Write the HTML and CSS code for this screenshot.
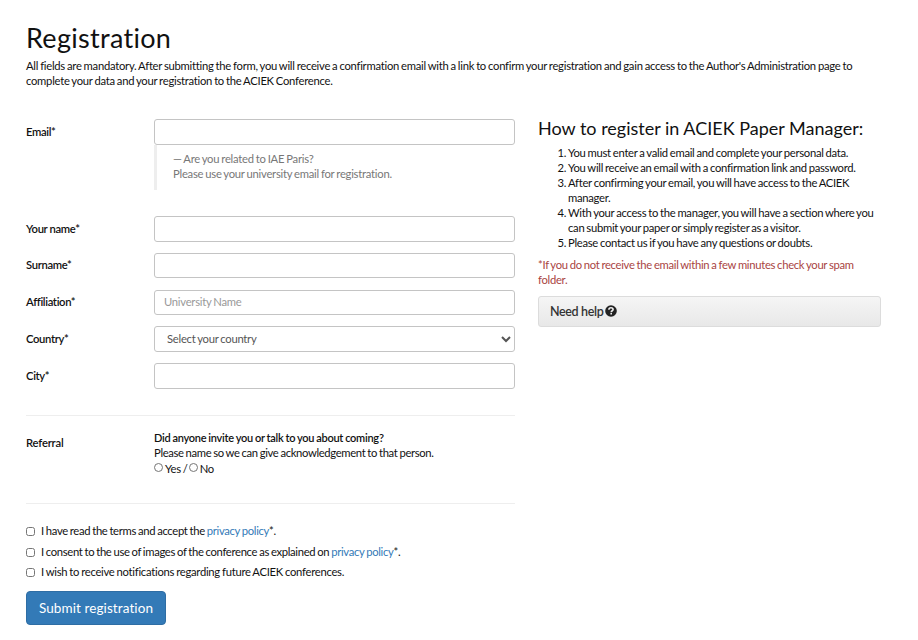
FILE: index.html
```
<!DOCTYPE html>
<html lang="en">
<head>
    <meta charset="UTF-8">
    <meta name="viewport" content="width=device-width, initial-scale=1.0">
    <title>Registration - ACIEK Paper Manager</title>
    <link rel="stylesheet" href="styles.css">
</head>
<body>
    <div class="header">
        <h1>Registration</h1>
        <p>All fields are mandatory. After submitting the form, you will receive a confirmation email with a link to confirm your registration and gain access to the Author's Administration page to<br>
        complete your data and your registration to the ACIEK Conference.</p>
    </div>

    <div class="content">
        <form id="registrationForm">
            <div class="form-row">
                <label for="email">Email*</label>
                <div class="field">
                    <input type="email" id="email" class="form-control">
                    <blockquote>
                        — Are you related to IAE Paris?<br>
                        Please use your university email for registration.
                    </blockquote>
                </div>
            </div>
            <div class="form-row">
                <label for="name">Your name*</label>
                <input type="text" id="name" class="form-control">
            </div>
            <div class="form-row">
                <label for="surname">Surname*</label>
                <input type="text" id="surname" class="form-control">
            </div>
            <div class="form-row">
                <label for="affiliation">Affiliation*</label>
                <input type="text" id="affiliation" class="form-control" placeholder="University Name">
            </div>
            <div class="form-row">
                <label for="country">Country*</label>
                <select id="country" class="form-control">
                    <option>Select your country</option>
                </select>
            </div>
            <div class="form-row">
                <label for="city">City*</label>
                <input type="text" id="city" class="form-control">
            </div>

            <div class="referral">
                <span class="referral-label">Referral</span>
                <div class="referral-text">
                    <strong>Did anyone invite you or talk to you about coming?</strong>
                    <span class="referral-note">Please name so we can give acknowledgement to that person.</span>
                    <div class="radios">
                        <input type="radio" name="referral" id="yes"><label for="yes">Yes /</label>
                        <input type="radio" name="referral" id="no"><label for="no">No</label>
                    </div>
                </div>
            </div>

            <div class="checkbox">
                <input type="checkbox" id="terms">
                <label for="terms">I have read the terms and accept the <a href="#">privacy policy</a>*.</label>
            </div>
            <div class="checkbox">
                <input type="checkbox" id="images">
                <label for="images">I consent to the use of images of the conference as explained on <a href="#">privacy policy</a>*.</label>
            </div>
            <div class="checkbox">
                <input type="checkbox" id="news">
                <label for="news" class="news">I wish to receive notifications regarding future ACIEK conferences.</label>
            </div>
            <button type="submit">Submit registration</button>
        </form>

        <div class="sidebar">
            <h2>How to register in ACIEK Paper Manager:</h2>
            <ol>
                <li>You must enter a valid email and complete your personal data.</li>
                <li>You will receive an email with a confirmation link and password.</li>
                <li>After confirming your email, you will have access to the ACIEK<br>manager.</li>
                <li>With your access to the manager, you will have a section where you<br>can submit your paper or simply register as a visitor.</li>
                <li>Please contact us if you have any questions or doubts.</li>
            </ol>
            <p class="text-danger">*If you do not receive the email within a few minutes check your spam<br>folder.</p>
            <div class="help">
                <span>Need help</span>
                <svg width="12" height="12" viewBox="0 0 12 12">
                    <circle cx="6" cy="6" r="5.8" fill="#222"/>
                    <path d="M3.9 4.7C3.9 3.2 4.9 2.7 6 2.7s2.1.6 2.1 1.7C8.1 5.8 6.2 5.7 6.2 7.2" fill="none" stroke="#eee" stroke-width="1.6"/>
                    <rect x="5.4" y="8" width="1.6" height="1.5" fill="#eee"/>
                </svg>
            </div>
        </div>
    </div>
</body>
</html>
```
FILE: styles.css
```
* {
    box-sizing: border-box;
}
body {
    font-family: Lato, sans-serif;
    font-size: 11.25px;
    font-weight: 400;
    line-height: 15px;
    letter-spacing: -0.263px;
    word-spacing: -0.6px;
    color: #111;
    margin: 0;
    padding: 23px 37px 0 26px;
    background-color: white;
    white-space: nowrap;
}
h1 {
    font-size: 27px;
    font-weight: 400;
    line-height: 30px;
    letter-spacing: 0.3px;
    margin: 0 0 5px;
}
p {
    margin: 0;
}
.content {
    display: grid;
    grid-template-columns: 489px 343px;
    column-gap: 23px;
    margin-top: 31px;
}
.form-row {
    display: grid;
    grid-template-columns: 128px 361px;
    margin-bottom: 11.25px;
}
.form-row > label {
    font-weight: 600;
    padding-top: 4.6px;
    letter-spacing: -0.35px;
    word-spacing: 0;
}
.form-control {
    display: block;
    width: 100%;
    height: 25.5px;
    padding: 3px 9px 5px;
    border: 1px solid #c4c4c4;
    border-radius: 3px;
    background-color: white;
    font: inherit;
    letter-spacing: inherit;
    word-spacing: inherit;
    color: #555;
}
.form-control::placeholder {
    color: #999;
}
select.form-control {
    padding: 0 3px 1px 8px;
}
blockquote {
    height: 45px;
    margin: 0 0 15.25px;
    padding: 6px 0 0 16px;
    border-left: 3px solid #eee;
    color: #777;
    letter-spacing: -0.25px;
}
.referral {
    display: grid;
    grid-template-columns: 128px 361px;
    height: 89px;
    margin: 26.25px 0 19px;
    padding-top: 14px;
    border-top: 1px solid #eee;
    border-bottom: 1px solid #eee;
}
.referral-label {
    font-weight: 600;
    padding-top: 5px;
    letter-spacing: -0.2px;
}
.referral-text strong,
.referral-note {
    display: block;
}
.referral-text strong {
    font-size: 11px;
    font-weight: 600;
    letter-spacing: -0.25px;
    word-spacing: -0.5px;
}
.referral-note {
    letter-spacing: -0.34px;
}
.radios {
    display: flex;
    align-items: center;
    height: 17px;
}
.radios input {
    width: 9px;
    height: 9px;
    margin: 0 2px 1px 0;
}
.radios label {
    margin-right: 1px;
}
.checkbox {
    display: flex;
    align-items: center;
    height: 15px;
    margin-bottom: 5.5px;
    letter-spacing: -0.32px;
}
.checkbox:nth-of-type(9) {
    margin: 6px 0 5px;
}
.checkbox input {
    width: 9px;
    height: 9px;
    margin: 2px 6px 0 0;
}
.checkbox .news {
    letter-spacing: -0.27px;
}
a {
    color: #337ab7;
    text-decoration: none;
}
button {
    display: block;
    width: 140px;
    height: 34px;
    margin-top: 12px;
    padding: 0;
    border: 1px solid #2e6da4;
    border-radius: 4px;
    background-color: #337ab7;
    color: white;
    font: 400 13.5px Lato, sans-serif;
    letter-spacing: 0.1px;
}
h2 {
    font-size: 18px;
    font-weight: 400;
    line-height: 20px;
    letter-spacing: 0;
    word-spacing: 0;
    margin: -1px 0 7px;
}
ol {
    margin: 0 0 7px;
    padding-left: 30px;
    letter-spacing: -0.29px;
}
.text-danger {
    color: #a94442;
    letter-spacing: -0.3px;
}
.help {
    display: flex;
    align-items: center;
    height: 31px;
    margin-top: 9px;
    padding: 0 0 0 11px;
    border: 1px solid #dcdcdc;
    border-radius: 3px;
    background-image: linear-gradient(#f5f5f5, #e8e8e8);
    color: #333;
    font-size: 12.5px;
    font-weight: 600;
    letter-spacing: -0.35px;
    word-spacing: 0;
}
.help svg {
    margin: 0 0 1px 2px;
}
```
